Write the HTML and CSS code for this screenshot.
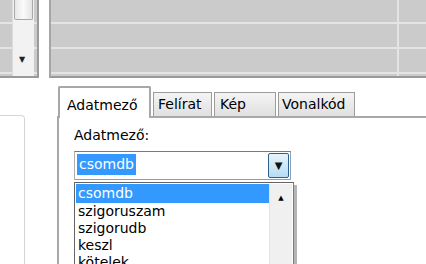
FILE: index.html
```html
<!DOCTYPE html>
<html>
<head>
<meta charset="utf-8"/>
<title>Adatmező</title>
<link rel="stylesheet" href="styles.css">
</head>
<body>
    <div id="top">
        <div class="grid left">
            <div class="row"></div>
            <div class="row"></div>
            <div class="row"></div>
            <div class="vscroll">
                <div class="thumb"></div>
                <div class="down">&#9660;</div>
            </div>
        </div>
        <div class="grid right">
            <div class="row"></div>
            <div class="row"></div>
            <div class="row"></div>
            <div class="colline"></div>
        </div>
    </div>

    <div id="bottom">
        <div class="sidebox"></div>
        <div id="tabpanel">
            <div class="tabstrip">
                <span class="tab active">Adatmező</span>
                <span class="tab t2">Felírat</span>
                <span class="tab t3">Kép</span>
                <span class="tab t4">Vonalkód</span>
            </div>
            <div class="page">
                <div class="label">Adatmező:</div>
                <div class="combo">
                    <span class="value">csomdb</span>
                    <span class="dropbtn">&#9660;</span>
                </div>
                <div class="droplist">
                    <div class="items">
                        <div class="item sel">csomdb</div>
                        <div class="item">szigoruszam</div>
                        <div class="item">szigorudb</div>
                        <div class="item">keszl</div>
                        <div class="item">kötelek</div>
                    </div>
                    <div class="listscroll"><span class="up">&#9650;</span></div>
                </div>
            </div>
        </div>
    </div>
</body>
</html>
```

FILE: styles.css
```css
        html, body {
            margin: 0;
            padding: 0;
            background: white;
            overflow: hidden;
            width: 426px;
            height: 264px;
            font-family: "DejaVu Sans", Tahoma, sans-serif;
            font-size: 14px;
            color: black;
        }
        #top {
            display: flex;
            height: 78px;
        }
        .grid {
            position: relative;
            background: #cbcbcb;
            display: flex;
            flex-direction: column;
            border-bottom: 2px solid #9a9a9a;
        }
        .grid .row {
            height: 23px;
            border-bottom: 2px solid #e4e4e4;
            box-sizing: content-box;
        }
        .grid .row:first-child {
            height: 22px;
        }
        .grid .row:last-child {
            border-bottom: none;
            flex: 1;
        }
        .left {
            width: 37px;
            border-right: 2px solid #9a9a9a;
        }
        .right {
            flex: 1;
            margin-left: 10px;
            border-left: 2px solid #a6a6a6;
        }
        .vscroll {
            position: absolute;
            left: 12px;
            top: 0;
            bottom: 0;
            width: 21px;
            background: #f2f2f2;
            border-left: 1px solid #dcdcdc;
        }
        .thumb {
            height: 19px;
            margin: 0 1px;
            background: linear-gradient(to right, #e8e8e8, #fafafa 50%, #e4e4e4);
            border: 1px solid #a8a8a8;
            border-top: none;
            border-radius: 0 0 2px 2px;
        }
        .down {
            position: absolute;
            left: 6px;
            top: 55px;
            font-size: 8px;
            color: #222;
        }
        .colline {
            position: absolute;
            left: 346px;
            top: 0;
            bottom: 0;
            width: 2px;
            background: #e4e4e4;
        }
        #bottom {
            display: flex;
            height: 186px;
            overflow: hidden;
        }
        .sidebox {
            width: 25px;
            height: 160px;
            margin-top: 37px;
            border: 1px solid #d5d5d5;
            border-left: none;
            border-bottom: none;
            border-radius: 0 4px 0 0;
            box-sizing: border-box;
            flex-shrink: 0;
        }
        #tabpanel {
            margin-left: 32px;
            margin-top: 7px;
            flex: 1;
        }
        .tabstrip {
            display: flex;
            align-items: flex-end;
            height: 31px;
            border-bottom: 2px solid #a8a8a8;
            padding-left: 1px;
        }
        .tab {
            box-sizing: border-box;
            height: 24px;
            line-height: 22px;
            padding-left: 8px;
            background: linear-gradient(#f4f4f4, #e0e0e0);
            border: 1px solid #9c9c9c;
            border-bottom: none;
            margin-right: 2px;
        }
        .tab.active {
            height: 32px;
            line-height: 34px;
            width: 93px;
            margin-bottom: -2px;
            background: white;
            border: 2px solid #a8a8a8;
            border-bottom: none;
            border-radius: 2px 2px 0 0;
            padding-left: 7px;
        }
        .t2 { width: 59px; padding-left: 4px; }
        .t3 { width: 62px; padding-left: 5px; }
        .t4 { width: 77px; padding-left: 3px; }
        .page {
            position: relative;
            border-left: 2px solid #a8a8a8;
            height: 160px;
            padding-left: 15px;
        }
        .label {
            padding-top: 9px;
            height: 22px;
        }
        .combo {
            display: flex;
            width: 217px;
            height: 29px;
            margin-top: 2px;
            box-sizing: border-box;
            border: 1px solid #8a9fb8;
            border-left-color: #b0b0b0;
            border-top-color: #7a7a7a;
            padding: 2px;
        }
        .value {
            background: #3399ff;
            color: white;
            height: 21px;
            line-height: 21px;
            padding: 0 2px;
        }
        .dropbtn {
            margin-left: auto;
            width: 21px;
            height: 25px;
            margin-top: -1px;
            margin-right: -1px;
            box-sizing: border-box;
            border: 1px solid #2c628b;
            border-radius: 2px;
            background: linear-gradient(#e6f4fc, #b7dcf3);
            font-size: 10px;
            line-height: 23px;
            text-align: center;
            color: #111;
        }
        .droplist {
            position: absolute;
            left: 15px;
            top: 64px;
            width: 216px;
            height: 110px;
            display: flex;
            background: white;
            border: 1px solid #646464;
            border-right: 1px solid #7a7a7a;
            box-shadow: 3px 3px 0 #b5b5b5;
            padding: 1px;
        }
        .items {
            flex: 1;
            line-height: 17px;
        }
        .item {
            padding-left: 2px;
            height: 17px;
        }
        .item.sel {
            background: #3399ff;
            color: white;
            height: 19px;
            line-height: 19px;
        }
        .listscroll {
            width: 22px;
            background: #f0f0f0;
            border-left: 1px solid #e4e4e4;
            text-align: center;
            font-size: 7px;
            line-height: 28px;
        }
```
